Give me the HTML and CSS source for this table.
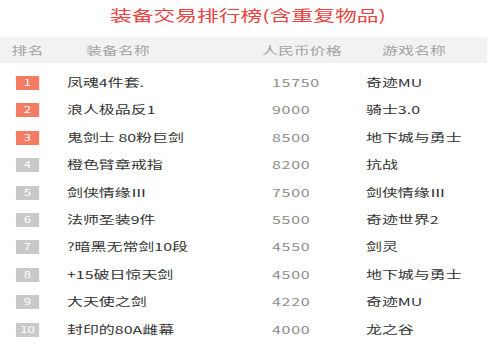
FILE: index.html
```html
<!DOCTYPE html>
<html lang="zh-CN">
<head>
<meta charset="utf-8">
<title>装备交易排行榜</title>
<link rel="stylesheet" href="styles.css">
</head>
<body>
<div class="page">
  <h1 class="title">装备交易排行榜(含重复物品)</h1>
  <div class="table">
    <div class="row head">
      <div class="c rank">排名</div>
      <div class="c name">装备名称</div>
      <div class="c price">人民币价格</div>
      <div class="c game">游戏名称</div>
    </div>
    <div class="row"><div class="c rank"><span class="badge hot">1</span></div><div class="c name">凤魂4件套.</div><div class="c price">15750</div><div class="c game">奇迹MU</div></div>
    <div class="row"><div class="c rank"><span class="badge hot">2</span></div><div class="c name">浪人极品反1</div><div class="c price">9000</div><div class="c game">骑士3.0</div></div>
    <div class="row"><div class="c rank"><span class="badge hot">3</span></div><div class="c name">鬼剑士 80粉巨剑</div><div class="c price">8500</div><div class="c game">地下城与勇士</div></div>
    <div class="row"><div class="c rank"><span class="badge">4</span></div><div class="c name">橙色臂章戒指</div><div class="c price">8200</div><div class="c game">抗战</div></div>
    <div class="row"><div class="c rank"><span class="badge">5</span></div><div class="c name">剑侠情缘Ⅲ</div><div class="c price">7500</div><div class="c game">剑侠情缘Ⅲ</div></div>
    <div class="row"><div class="c rank"><span class="badge">6</span></div><div class="c name">法师圣装9件</div><div class="c price">5500</div><div class="c game">奇迹世界2</div></div>
    <div class="row"><div class="c rank"><span class="badge">7</span></div><div class="c name">?暗黑无常剑10段</div><div class="c price">4550</div><div class="c game">剑灵</div></div>
    <div class="row"><div class="c rank"><span class="badge">8</span></div><div class="c name">+15破日惊天剑</div><div class="c price">4500</div><div class="c game">地下城与勇士</div></div>
    <div class="row"><div class="c rank"><span class="badge">9</span></div><div class="c name">大天使之剑</div><div class="c price">4220</div><div class="c game">奇迹MU</div></div>
    <div class="row"><div class="c rank"><span class="badge">10</span></div><div class="c name">封印的80A雌幕</div><div class="c price">4000</div><div class="c game">龙之谷</div></div>
  </div>
</div>
</body>
</html>
```

FILE: styles.css
```css
html, body {
  margin: 0;
  padding: 0;
  background: #fff;
}
body {
  font-family: "Noto Sans CJK SC", "Noto Sans", sans-serif;
  overflow: hidden;
}
.page {
  width: 336px;
  transform: scaleX(1.45);
  transform-origin: 0 0;
}
.title {
  margin: 0 0 7px 0;
  height: 30px;
  line-height: 30px;
  font-size: 15px;
  font-weight: normal;
  color: #e94242;
  text-align: center;
  padding-left: 6px;
}
.row {
  display: grid;
  grid-template-columns: 37.9px 141.4px 69px 1fr;
  height: 27.4px;
  align-items: center;
  font-size: 11px;
  color: #333;
  white-space: nowrap;
}
.row.head {
  height: 26px;
  background: #f2f2f2;
  color: #a3a3a3;
  margin-bottom: 5.3px;
}
.c { line-height: 14px; }
.rank { text-align: center; }
.name { padding-left: 8.3px; }
.price { padding-left: 8.3px; color: #8c8c8c; letter-spacing: 0.5px; }
.game { padding-left: 4.1px; }
.head .name { padding-left: 21.4px; }
.head .price { padding-left: 1.4px; color: #a3a3a3; letter-spacing: 0; }
.head .game { padding-left: 15.2px; }
.badge {
  display: inline-block;
  width: 16.5px;
  height: 14px;
  line-height: 14px;
  font-size: 9px;
  color: #fff;
  background: #c9c9c9;
  text-align: center;
  vertical-align: middle;
}
.badge.hot { background: #f47c64; }
```
